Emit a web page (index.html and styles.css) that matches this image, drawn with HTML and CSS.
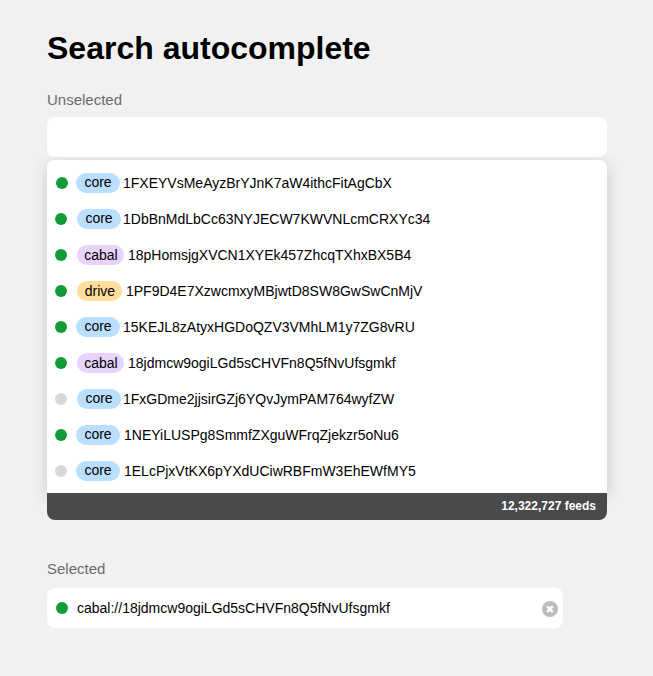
FILE: index.html
```html
<!DOCTYPE html>
<html lang="en">
<head>
<meta charset="utf-8">
<title>Search autocomplete</title>
<link rel="stylesheet" href="styles.css">
</head>
<body>
<main class="page">
  <h1 class="title">Search autocomplete</h1>
  <section class="example">
    <h2 class="label">Unselected</h2>
    <div class="field"></div>
    <div class="dropdown">
      <ul class="results">
        <li class="row row--inset"><span class="dot"></span><span class="tag tag--core">core</span><span class="key">1FXEYVsMeAyzBrYJnK7aW4ithcFitAgCbX</span></li>
        <li class="row row--wide"><span class="dot"></span><span class="tag tag--core">core</span><span class="key">1DbBnMdLbCc63NYJECW7KWVNLcmCRXYc34</span></li>
        <li class="row row--wide"><span class="dot"></span><span class="tag tag--cabal">cabal</span><span class="key">18pHomsjgXVCN1XYEk457ZhcqTXhxBX5B4</span></li>
        <li class="row row--wide"><span class="dot"></span><span class="tag tag--drive">drive</span><span class="key">1PF9D4E7XzwcmxyMBjwtD8SW8GwSwCnMjV</span></li>
        <li class="row"><span class="dot"></span><span class="tag tag--core">core</span><span class="key">15KEJL8zAtyxHGDoQZV3VMhLM1y7ZG8vRU</span></li>
        <li class="row row--wide"><span class="dot"></span><span class="tag tag--cabal">cabal</span><span class="key">18jdmcw9ogiLGd5sCHVFn8Q5fNvUfsgmkf</span></li>
        <li class="row row--wide"><span class="dot dot--off"></span><span class="tag tag--core">core</span><span class="key">1FxGDme2jjsirGZj6YQvJymPAM764wyfZW</span></li>
        <li class="row row--loose"><span class="dot"></span><span class="tag tag--core">core</span><span class="key">1NEYiLUSPg8SmmfZXguWFrqZjekzr5oNu6</span></li>
        <li class="row row--loose"><span class="dot dot--off"></span><span class="tag tag--core">core</span><span class="key">1ELcPjxVtKX6pYXdUCiwRBFmW3EhEWfMY5</span></li>
      </ul>
      <div class="summary">12,322,727 feeds</div>
    </div>
  </section>
  <section class="example example--selected">
    <h2 class="label">Selected</h2>
    <div class="field field--selected">
      <span class="dot"></span>
      <span class="value">cabal://18jdmcw9ogiLGd5sCHVFn8Q5fNvUfsgmkf</span>
      <svg class="clear" viewBox="0 0 16 16" width="16" height="16" aria-hidden="true"><circle cx="8" cy="8" r="8" fill="#bcbcbc"/><path d="M5.2 5.4 10.8 11M10.8 5.4 5.2 11" stroke="#fff" stroke-width="2.4"/></svg>
    </div>
  </section>
</main>
</body>
</html>
```
FILE: styles.css
```css
* { box-sizing: border-box; }
body {
  margin: 0;
  background: #f1f1f1;
  color: #000;
  font: 14px/20px "Liberation Sans", Arial, sans-serif;
}
.page { width: 560px; margin-left: 47px; padding-top: 28px; }
.title { margin: 0; font-size: 32px; line-height: 40px; font-weight: 700; }
.label {
  margin: 22px 0 7px;
  font-size: 15px;
  line-height: 20px;
  font-weight: 400;
  color: #6b6b6b;
}
.field { position: relative; z-index: 1; height: 40px; border-radius: 8px; background: #fff; }
.dropdown { margin-top: 3px; }
.results {
  height: 333px;
  margin: 0;
  padding: 5px 0 0;
  list-style: none;
  background: #fff;
  border-radius: 8px 8px 0 0;
  box-shadow: 0 4px 16px rgba(0, 0, 0, 0.17);
}
.row { display: flex; align-items: center; height: 36px; padding-left: 8px; }
.dot { flex: none; width: 12px; height: 12px; border-radius: 50%; background: #149b39; }
.dot--off { background: #d9d9d9; }
.tag {
  width: 44px;
  height: 20px;
  margin-left: 9px;
  border-radius: 10px;
  line-height: 19px;
  text-align: center;
}
.row--inset { padding-left: 9px; }
.row--inset .tag { margin-left: 8px; }
.row--wide .tag { margin-left: 10px; }
.tag--core { background: #bbdffe; }
.tag--cabal { width: 47px; line-height: 21px; padding-left: 1px; background: #e7d3fe; }
.tag--drive { width: 45px; line-height: 21px; padding-left: 1px; background: #ffdd9b; }
.key { margin-left: 3px; white-space: nowrap; }
.row--wide .key { margin-left: 2px; }
.row--loose .key { margin-left: 4px; }
.row--wide .tag--cabal + .key,
.row--wide .tag--drive + .key { margin-left: 4px; }
.summary {
  position: relative;
  height: 27px;
  padding-right: 11px;
  border-radius: 0 0 8px 8px;
  background: #4a4a4a;
  color: #fff;
  font-size: 12px;
  line-height: 27px;
  font-weight: 700;
  text-align: right;
}
.example--selected .label { margin: 39px 0 9px; }
.field--selected { display: flex; align-items: center; width: 516px; padding: 0 5px 0 9px; }
.value { margin-left: 9px; }
.clear { margin: 2px 0 0 auto; }
```
